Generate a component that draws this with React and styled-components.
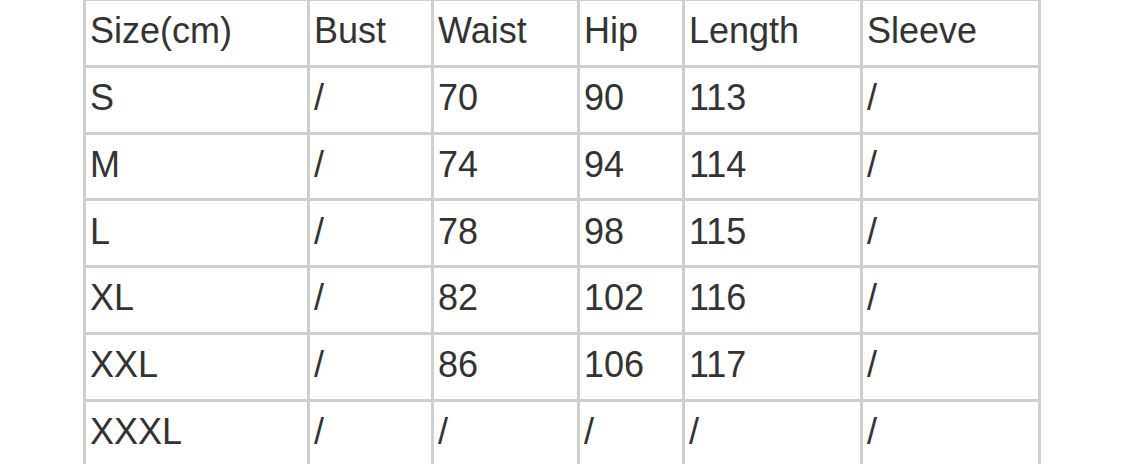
import React from 'react';
import styled, { createGlobalStyle } from 'styled-components';

const GlobalStyle = createGlobalStyle`
  html, body {
    margin: 0;
    padding: 0;
    background: #fff;
    overflow: hidden;
  }
`;

const Page = styled.div`
  width: 1125px;
  height: 464px;
  overflow: hidden;
  padding-left: 83px;
  box-sizing: border-box;
  font-family: "Liberation Sans", Arial, Helvetica, sans-serif;
`;

const Table = styled.table`
  margin-top: -2px;
  border-collapse: collapse;
  table-layout: fixed;
  width: 958px;
  color: #333;
`;

const Cell = styled.td`
  border: 3px solid #cfcfcf;
  height: 59.8px;
  padding: 0 4px 4px;
  font-size: 36px;
  line-height: 1.15;
  text-align: left;
  vertical-align: middle;
  white-space: nowrap;
  overflow: hidden;
`;

const widths = [224, 124, 146, 105, 178, 178];

const header = ['Size(cm)', 'Bust', 'Waist', 'Hip', 'Length', 'Sleeve'];

const rows = [
  ['S', '/', '70', '90', '113', '/'],
  ['M', '/', '74', '94', '114', '/'],
  ['L', '/', '78', '98', '115', '/'],
  ['XL', '/', '82', '102', '116', '/'],
  ['XXL', '/', '86', '106', '117', '/'],
  ['XXXL', '/', '/', '/', '/', '/'],
];

const App = () => {
  return (
    <>
      <GlobalStyle />
      <Page>
        <Table>
          <colgroup>
            {widths.map((w, i) => (
              <col key={i} style={{ width: w }} />
            ))}
          </colgroup>
          <tbody>
            <tr>
              {header.map((h) => (
                <Cell key={h}>{h}</Cell>
              ))}
            </tr>
            {rows.map((r) => (
              <tr key={r[0]}>
                {r.map((v, i) => (
                  <Cell key={i}>{v}</Cell>
                ))}
              </tr>
            ))}
          </tbody>
        </Table>
      </Page>
    </>
  );
};

export default App;
